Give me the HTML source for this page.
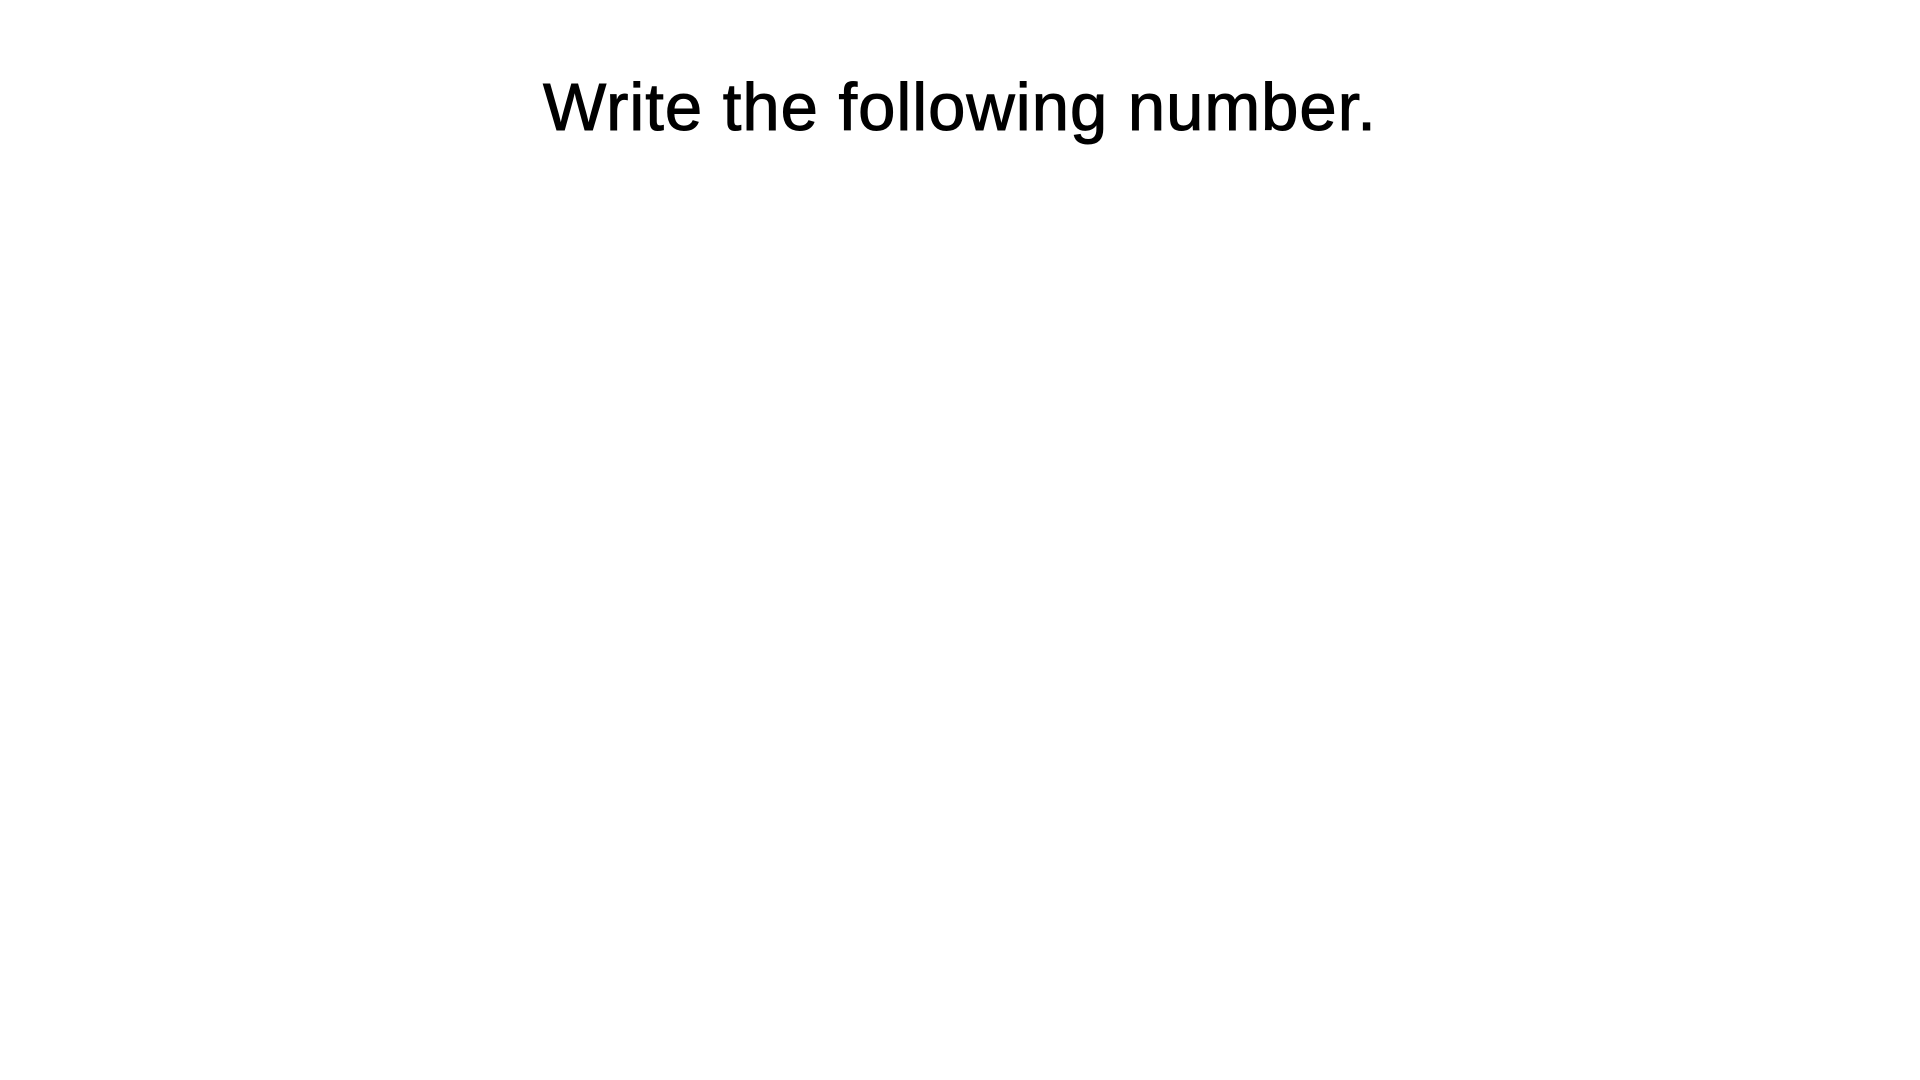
<!DOCTYPE html>
<html><head><style>
html,body{margin:0;padding:0;background:#fff;width:1920px;height:1080px;overflow:hidden}
.t{position:absolute;left:0;width:1920px;top:74px;text-align:center;font-family:"Liberation Sans",sans-serif;font-size:67px;color:#000;line-height:1;letter-spacing:1px;-webkit-text-stroke:1px #000}
</style></head><body>
<div class="t">Write the following number.</div>
</body></html>
